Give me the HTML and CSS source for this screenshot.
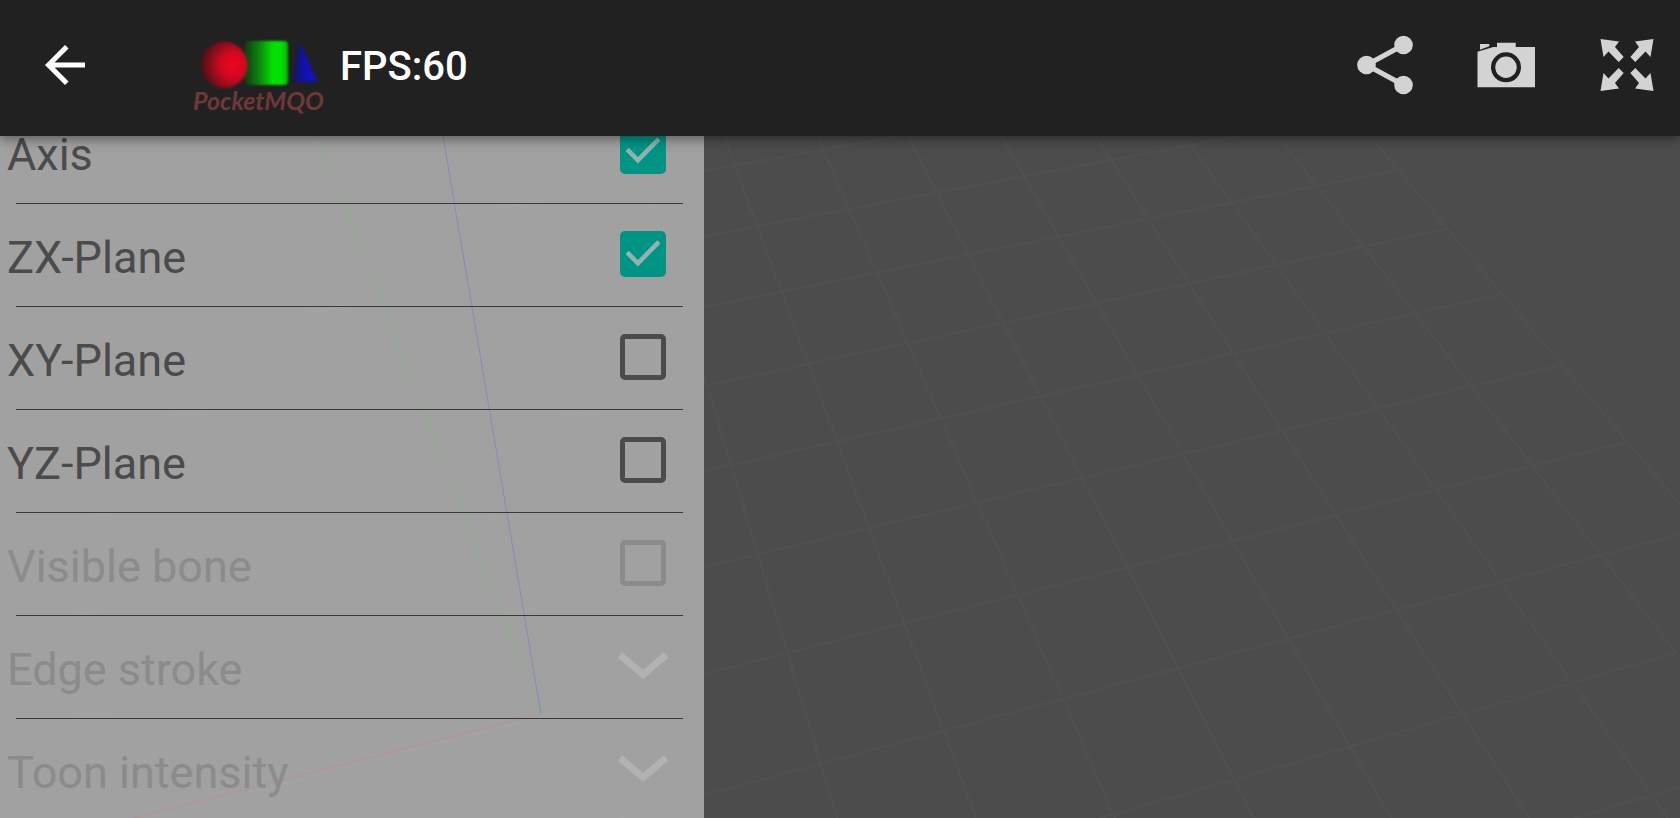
FILE: index.html
```html
<!DOCTYPE html>
<html lang="en">

<head>
    <meta charset="UTF-8">
    <meta name="viewport" content="width=device-width, initial-scale=1.0">
    <title>PocketMQO</title>

    <link rel="stylesheet" href="styles.css">
</head>

<body>
    <header class="toolbar">
        <button class="back" type="button" aria-label="Back">
            <svg viewBox="0 0 24 24">
                <path d="M20 11H7.83l5.59-5.59L12 4l-8 8 8 8 1.41-1.41L7.83 13H20v-2z" />
            </svg>
        </button>

        <svg class="logo" viewBox="190 13 140 104" role="img" aria-label="PocketMQO">
            <defs>
                <radialGradient id="ball" cx="0.7" cy="0.5" r="0.68">
                    <stop offset="0" stop-color="#ee0422" />
                    <stop offset="0.4" stop-color="#d20820" />
                    <stop offset="1" stop-color="#4a1218" />
                </radialGradient>
                <linearGradient id="tube">
                    <stop offset="0" stop-color="#143a14" />
                    <stop offset="0.35" stop-color="#0b8a0b" />
                    <stop offset="0.65" stop-color="#00e400" />
                    <stop offset="0.85" stop-color="#00e000" />
                    <stop offset="1" stop-color="#0ab00a" />
                </linearGradient>
                <linearGradient id="cone">
                    <stop offset="0" stop-color="#151550" />
                    <stop offset="0.5" stop-color="#1212b4" />
                    <stop offset="1" stop-color="#1414b8" />
                </linearGradient>
            </defs>
            <g class="logo-shapes">
                <rect x="245" y="41" width="43" height="44" rx="4" fill="url(#tube)" />
                <circle cx="224" cy="65" r="23.5" fill="url(#ball)" />
                <path d="M300 42L318 82H292Z" fill="url(#cone)" />
            </g>
            <text class="logo-text" x="193" y="110">PocketMQO</text>
        </svg>

        <h1 class="fps">FPS:60</h1>

        <div class="actions">
            <button type="button" aria-label="Share">
                <svg viewBox="0 0 64 64">
                    <path d="M50.5 12L13.5 32 50.5 52" fill="none" stroke="currentColor" stroke-width="5" />
                    <circle cx="13.5" cy="32" r="9.3" />
                    <circle cx="50.5" cy="12" r="9.3" />
                    <circle cx="50.5" cy="52" r="9.3" />
                </svg>
            </button>
            <button type="button" aria-label="Take picture">
                <svg viewBox="0 0 64 64">
                    <path fill-rule="evenodd" d="M3.5 18.7L19.3 14H23V9.7H41.7V14H61V54.3H3.5ZM32 19.3a15 15 0 1 0 0 30a15 15 0 1 0 0-30Z" />
                    <path d="M6 11H15.3V13.3L6 16.7Z" />
                    <circle cx="32" cy="34.3" r="10.7" />
                </svg>
            </button>
            <button type="button" aria-label="Full screen">
                <svg viewBox="0 0 64 64">
                    <path id="arrow" d="M5.5 6L24 8.5 20 14 28.7 24 23.7 29 13.5 18.5 8.5 24Z" />
                    <use href="#arrow" transform="translate(64 0) scale(-1 1)" />
                    <use href="#arrow" transform="translate(0 64) scale(1 -1)" />
                    <use href="#arrow" transform="translate(64 64) scale(-1 -1)" />
                </svg>
            </button>
        </div>
    </header>

    <main class="viewer">
        <!-- 3D view: ground grid and the three axes -->
        <svg class="scene" viewBox="0 136 1680 682" preserveAspectRatio="xMinYMin slice" aria-hidden="true">
            <g class="grid">
                <path d="M0 297L905 135" />
                <path d="M0 372L758 226 1240 136" />
                <path d="M0 450L704 307 1396 170" />
                <path d="M0 537L704 386 1447 229" />
                <path d="M0 632L704 471 1502 294" />
                <path d="M0 738L704 567 1561 365" />
                <path d="M240 795L704 674 1626 442" />
                <path d="M620 818L704 795 1680 534" />
                <path d="M1100 818L1676 653" />
                <path d="M1575 818L1680 787" />

                <path d="M632 136L707 385 837 818" />
                <path d="M724 136L837 441 976 818" />
                <path d="M817 136L941 419 1115 818" />
                <path d="M908 136L1041 397 1254 818" />
                <path d="M1001 136L1138 375 1391 818" />
                <path d="M1096 136L1233 353 1529 818" />
                <path d="M1184 136L1325 333 1668 818" />
                <path d="M1278 136L1415 313 1680 658" />
                <path d="M1370 136L1502 294 1680 504" />
            </g>
            <path class="axis axis-x" d="M541 714L134 818" />
            <path class="axis axis-y" d="M318 136L541 714" />
            <path class="axis axis-z" d="M443 136L541 714" />
        </svg>

        <aside class="panel">
            <ul class="options">
                <li>
                    <div class="option">
                        <label for="axis">Axis</label>
                        <input type="checkbox" id="axis" checked>
                    </div>
                </li>
                <li>
                    <div class="option">
                        <label for="zx-plane">ZX-Plane</label>
                        <input type="checkbox" id="zx-plane" checked>
                    </div>
                </li>
                <li>
                    <div class="option">
                        <label for="xy-plane">XY-Plane</label>
                        <input type="checkbox" id="xy-plane">
                    </div>
                </li>
                <li>
                    <div class="option">
                        <label for="yz-plane">YZ-Plane</label>
                        <input type="checkbox" id="yz-plane">
                    </div>
                </li>
                <li>
                    <div class="option disabled">
                        <label for="visible-bone">Visible bone</label>
                        <input type="checkbox" id="visible-bone" disabled>
                    </div>
                </li>
                <li>
                    <div class="option disabled">
                        <label for="edge-stroke">Edge stroke</label>
                        <button class="expand" id="edge-stroke" type="button" disabled>
                            <svg viewBox="0 0 50 28">
                                <path d="M2 3L25 22.500 48 3" />
                            </svg>
                        </button>
                    </div>
                </li>
                <li>
                    <div class="option disabled">
                        <label for="toon-intensity">Toon intensity</label>
                        <button class="expand" id="toon-intensity" type="button" disabled>
                            <svg viewBox="0 0 50 28">
                                <path d="M2 3L25 22.500 48 3" />
                            </svg>
                        </button>
                    </div>
                </li>
            </ul>
        </aside>
    </main>
</body>

</html>
```

FILE: styles.css
```css
* {
    margin: 0;
    padding: 0;
    box-sizing: border-box;
}

body {
    height: 100vh;
    display: flex;
    flex-direction: column;
    overflow: hidden;
    font-family: Roboto, "Liberation Sans", sans-serif;
    background-color: #4c4c4c;
}

ul {
    list-style: none;
}

button {
    border: none;
    background: none;
    cursor: pointer;
}

svg {
    display: block;
}

/* toolbar */

.toolbar {
    position: relative;
    z-index: 1;
    display: flex;
    align-items: center;
    height: 136px;
    padding: 0 5px 6px 35px;
    background-color: #212121;
    box-shadow: 0 2px 12px rgba(0, 0, 0, 0.5);
}

.back {
    margin-right: 95px;
}

.back svg {
    width: 60px;
    height: 60px;
    fill: white;
}

.logo {
    width: 140px;
    height: 104px;
    margin-right: 10px;
}

.logo-shapes {
    filter: blur(1px);
}

.logo-text {
    font-family: Lato, sans-serif;
    font-size: 25px;
    font-weight: bold;
    font-style: italic;
    fill: #6e3838;
}

.fps {
    font-size: 40px;
    line-height: 48px;
    padding-top: 4px;
    font-weight: 500;
    color: white;
}

.actions {
    display: flex;
    gap: 25px;
    margin-left: auto;
}

.actions button {
    width: 96px;
    color: #d3d3d3;
}

.actions svg {
    width: 64px;
    height: 64px;
    margin: 0 auto;
    fill: currentColor;
}

/* 3D view */

.viewer {
    position: relative;
    flex: 1;
    min-height: 0;
    display: flex;
}

.scene {
    position: absolute;
    inset: 0;
    width: 100%;
    height: 100%;
}

.grid {
    fill: none;
    stroke: #505050;
    stroke-width: 2;
}

.axis {
    stroke-width: 1;
}

.axis-x {
    stroke: #a01818;
}

.axis-y {
    stroke: #107010;
}

.axis-z {
    stroke: #101090;
}

/* settings panel */

.panel {
    position: relative;
    width: 44rem;
    overflow: hidden;
    background-color: rgba(218, 218, 218, 0.6);
}

/* list is scrolled a little under the toolbar */
.options {
    margin-top: -35px;
}

.options li + li::before {
    content: "";
    display: block;
    height: 1px;
    margin: 0 21px 0 16px;
    background-color: #383838;
}

.option {
    display: flex;
    align-items: center;
    justify-content: space-between;
    height: 102px;
    padding: 0 36px 2px 7px;
    font-size: 45px;
    line-height: 36px;
    color: #4b4b4b;
}

.option label {
    padding-top: 8px;
}

.option.disabled {
    color: #8b8b8b;
}

input[type="checkbox"] {
    appearance: none;
    width: 46px;
    height: 46px;
    margin-right: 2px;
    border: 5px solid currentColor;
    border-radius: 5px;
    color: inherit;
}

input[type="checkbox"]:checked {
    border: none;
    background-color: #009485;
}

input[type="checkbox"]:checked::before {
    content: "";
    display: block;
    height: 100%;
    background-color: #92b3af;
    clip-path: polygon(12% 50%, 19% 43%, 39% 63%, 81% 20%, 88% 27%, 39% 77%);
}

.expand svg {
    width: 50px;
    height: 28px;
    fill: none;
    stroke: #b2b2b2;
    stroke-width: 7;
}
```
